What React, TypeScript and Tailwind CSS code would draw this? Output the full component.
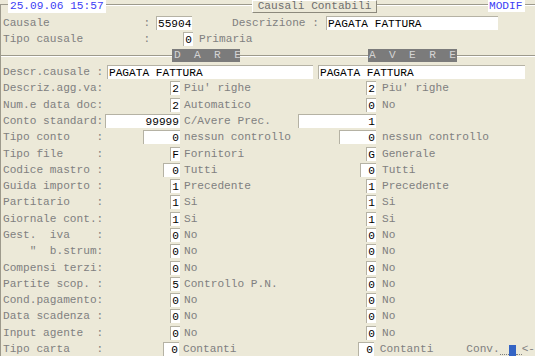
import clsx from "clsx";
import type { ReactNode } from "react";

type Field = {
  label: string;
  l: string;
  lw: string;
  ld: string;
  r: string;
  rw: string;
  rd: string;
};

const fields: Field[] = [
  { label: "Descriz.agg.va:", l: "2", lw: "w-[10px]", ld: "Piu' righe", r: "2", rw: "w-[10px]", rd: "Piu' righe" },
  { label: "Num.e data doc:", l: "2", lw: "w-[10px]", ld: "Automatico", r: "0", rw: "w-[10px]", rd: "No" },
  { label: "Conto standard:", l: "99999", lw: "w-[75px]", ld: "C/Avere Prec.", r: "1", rw: "w-[78px]", rd: "" },
  { label: "Tipo conto    :", l: "0", lw: "w-[37px]", ld: "nessun controllo", r: "0", rw: "w-[37px]", rd: "nessun controllo" },
  { label: "Tipo file     :", l: "F", lw: "w-[10px]", ld: "Fornitori", r: "G", rw: "w-[10px]", rd: "Generale" },
  { label: "Codice mastro :", l: "0", lw: "w-[17px]", ld: "Tutti", r: "0", rw: "w-[16px]", rd: "Tutti" },
  { label: "Guida importo :", l: "1", lw: "w-[10px]", ld: "Precedente", r: "1", rw: "w-[10px]", rd: "Precedente" },
  { label: "Partitario    :", l: "1", lw: "w-[10px]", ld: "Si", r: "1", rw: "w-[10px]", rd: "Si" },
  { label: "Giornale cont.:", l: "1", lw: "w-[10px]", ld: "Si", r: "1", rw: "w-[10px]", rd: "Si" },
  { label: "Gest.  iva    :", l: "0", lw: "w-[10px]", ld: "No", r: "0", rw: "w-[10px]", rd: "No" },
  { label: '    "  b.strum:', l: "0", lw: "w-[10px]", ld: "No", r: "0", rw: "w-[10px]", rd: "No" },
  { label: "Compensi terzi:", l: "0", lw: "w-[10px]", ld: "No", r: "0", rw: "w-[10px]", rd: "No" },
  { label: "Partite scop. :", l: "5", lw: "w-[10px]", ld: "Controllo P.N.", r: "0", rw: "w-[10px]", rd: "No" },
  { label: "Cond.pagamento:", l: "0", lw: "w-[10px]", ld: "No", r: "0", rw: "w-[10px]", rd: "No" },
  { label: "Data scadenza :", l: "0", lw: "w-[10px]", ld: "No", r: "0", rw: "w-[10px]", rd: "No" },
  { label: "Input agente  :", l: "0", lw: "w-[10px]", ld: "No", r: "0", rw: "w-[10px]", rd: "No" },
];

function Box({ w, left, className, children }: { w: string; left?: boolean; className?: string; children: ReactNode }) {
  return (
    <span
      className={clsx(
        "inline-block h-[14px] shrink-0 bg-white border-l border-t border-[#b5b2a4] text-black leading-[14px] whitespace-pre overflow-hidden",
        w,
        left ? "pl-[1px]" : "text-right pr-[1px]",
        className
      )}
    >
      {children}
    </span>
  );
}

function Line({ w }: { w: string }) {
  return <div className={clsx("h-[2px] border-t border-[#9d9a8c] border-b border-b-white", w)} />;
}

function FieldRow({ f, extra }: { f: Field; extra?: ReactNode }) {
  return (
    <div className="flex h-[16.3px] items-center">
      <div className="w-[179px] flex items-center justify-between pl-[2px]">
        <span className="whitespace-pre text-[#808080]">{f.label}</span>
        <Box w={f.lw}>{f.l}</Box>
      </div>
      <div className="w-[196px] flex items-center justify-between pl-[4px]">
        <span className="whitespace-pre text-[#808080]">{f.ld}</span>
        <Box w={f.rw}>{f.r}</Box>
      </div>
      <span className="pl-[6px] whitespace-pre text-[#808080]">{f.rd}</span>
      {extra}
    </div>
  );
}

export default function App() {
  const last: Field = {
    label: "Tipo carta    :",
    l: "0",
    lw: "w-[16px]",
    ld: "Contanti",
    r: "0",
    rw: "w-[16px]",
    rd: "Contanti",
  };

  const conv = (
    <>
      <span className="ml-[33px] whitespace-pre text-[#808080]">Conv.</span>
      <span className="w-[9px] h-[11px] border-b border-dotted border-[#808080]" />
      <span className="w-[7px] h-[13px] bg-[#3464c4] mt-[4px]" />
      <span className="w-[6px] h-[11px] border-b border-dotted border-[#808080]" />
      <span className="text-[#808080] whitespace-pre">&lt;-</span>
    </>
  );

  return (
    <div className="w-[535px] h-[356px] overflow-hidden bg-[#ece9d8] font-['Liberation_Mono','Courier_New',monospace] text-[11.15px] leading-[14px]">
      {/* header */}
      <div className="flex items-start h-[15px]">
        <div className="w-[8px] h-[15px] mt-[4px] border-t border-l border-[#9d9a8c]" />
        <div className="w-[98px] h-[13px] bg-white text-[#3d3df5] pl-[2px] leading-[13px] whitespace-pre">
          25.09.06 15:57
        </div>
        <div className="w-[146px] mt-[4px]">
          <Line w="w-full" />
        </div>
        <div className="w-[125px] h-[13px] border-t border-l border-white border-r border-b border-r-[#8c897c] border-b-[#8c897c] text-center text-[#6e6e6e] leading-[11px] whitespace-pre">
          Causali Contabili
        </div>
        <div className="w-[111px] mt-[4px]">
          <Line w="w-full" />
        </div>
        <div className="w-[37px] h-[12px] bg-white text-[#3d3df5] leading-[12px] pl-[1px]">MODIF</div>
        <div className="flex-1 mt-[4px]">
          <Line w="w-full" />
        </div>
      </div>

      {/* body */}
      <div className="border-l border-[#9d9a8c]">
        <div className="flex h-[16.3px] items-center">
          <span className="w-[155px] pl-[2px] whitespace-pre text-[#808080]">Causale              :</span>
          <Box w="w-[36px]" left>
            55904
          </Box>
          <span className="ml-[40px] whitespace-pre text-[#808080]">Descrizione :</span>
          <Box w="w-[172px]" left className="ml-[7px]">
            PAGATA FATTURA
          </Box>
        </div>

        <div className="flex h-[16.3px] items-center">
          <span className="w-[182px] pl-[2px] whitespace-pre text-[#808080]">Tipo causale         :</span>
          <Box w="w-[10px]">0</Box>
          <span className="ml-[6px] text-[#808080]">Primaria</span>
        </div>

        <div className="flex h-[16.3px] items-center">
          <Line w="w-[171px]" />
          <div className="w-[68px] h-[13px] bg-[#7b7b7b] text-[#d4d4d4] leading-[13px] pl-[2px] whitespace-pre">
            D  A  R  E
          </div>
          <Line w="w-[128px]" />
          <div className="w-[89px] h-[13px] bg-[#7b7b7b] text-[#d4d4d4] leading-[13px] pl-[1px] whitespace-pre">
            A  V  E  R  E
          </div>
          <Line w="flex-1" />
        </div>

        <div className="flex h-[16.3px] items-center">
          <span className="w-[106px] pl-[2px] whitespace-pre text-[#808080]">Descr.causale :</span>
          <Box w="w-[206px]" left>
            PAGATA FATTURA
          </Box>
          <Box w="w-[207px]" left className="ml-[5px]">
            PAGATA FATTURA
          </Box>
        </div>

        {fields.map((f, i) => (
          <FieldRow key={i} f={f} />
        ))}

        <FieldRow f={last} extra={conv} />
      </div>
    </div>
  );
}
